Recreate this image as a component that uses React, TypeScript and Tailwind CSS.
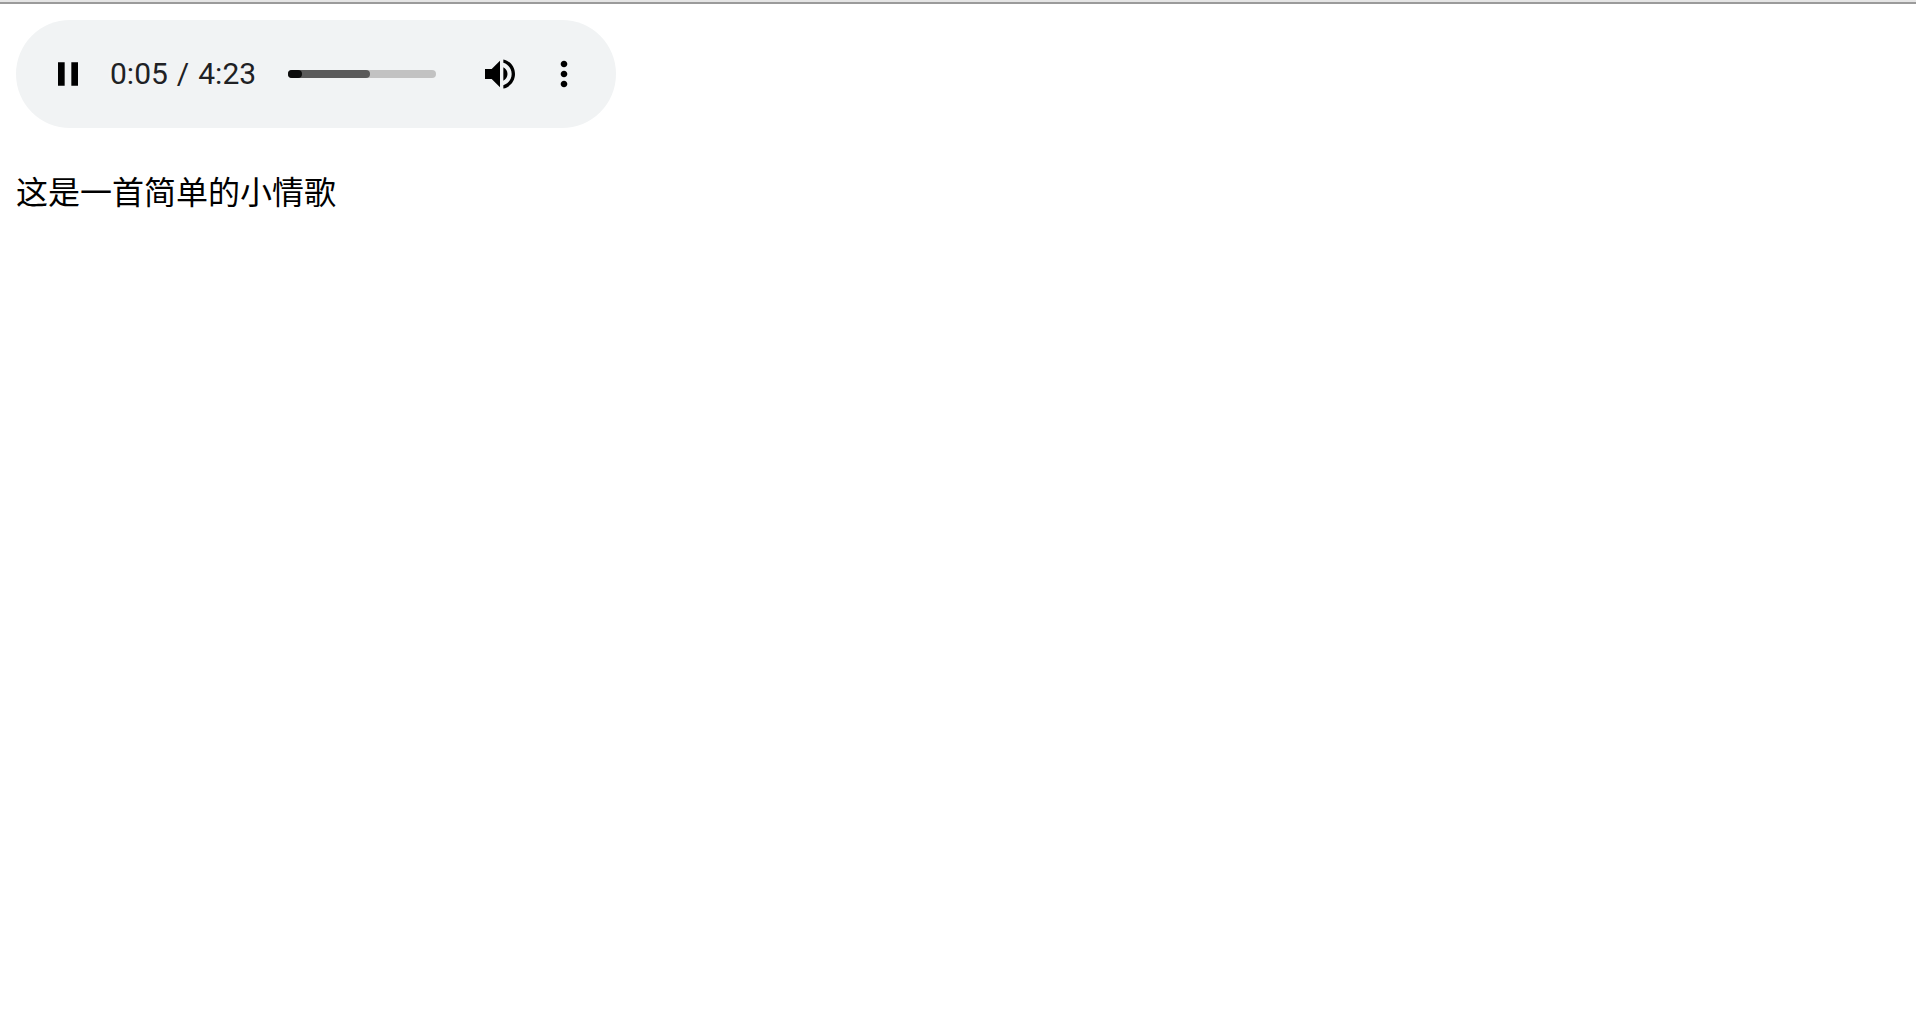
import React, { useState } from 'react';

const DURATION = 263;
const BUFFERED = 145;

const formatTime = (seconds: number) => {
  const minutes = Math.floor(seconds / 60);
  return `${minutes}:${String(seconds % 60).padStart(2, '0')}`;
};

interface IconButtonProps {
  label: string;
  path: string;
  className?: string;
  onClick?: () => void;
}

function IconButton({ label, path, className = '', onClick }: IconButtonProps) {
  return (
    <button type="button" aria-label={label} onClick={onClick} className={`shrink-0 ${className}`}>
      <svg viewBox="0 0 24 24" className="block w-10 h-10" fill="black">
        <path d={path} />
      </svg>
    </button>
  );
}

function AudioPlayer() {
  const [playing, setPlaying] = useState(true);
  const [muted, setMuted] = useState(false);
  const [time, setTime] = useState(5);

  return (
    <div className="flex items-center w-[600px] max-w-full h-[108px] px-8 rounded-full bg-[#f1f3f4]">
      <IconButton
        label={playing ? 'pause' : 'play'}
        path={playing ? 'M6 19h4V5H6v14zm8-14v14h4V5h-4z' : 'M8 5v14l11-7z'}
        onClick={() => setPlaying(!playing)}
      />
      <div className="flex gap-[9px] w-[200px] pl-[22px] shrink-0 whitespace-nowrap font-['Roboto',sans-serif] text-[30px] leading-10 text-[#202124] text-shadow-[0_0_10px_#ffffff80]">
        <span>{formatTime(time)}</span>
        <span>/</span>
        <span>{formatTime(DURATION)}</span>
      </div>

      {/* Timeline */}
      <div className="relative flex-1 h-2 rounded-full bg-[#c2c2c2]">
        <div
          className="absolute inset-y-0 left-0 rounded-full bg-[#5a5a5a]"
          style={{ width: `${(BUFFERED / DURATION) * 100}%` }}
        />
        <div
          className="absolute inset-y-0 left-0 min-w-[14px] rounded-full bg-[#0c0c0c]"
          style={{ width: `${(time / DURATION) * 100}%` }}
        />
        <input
          type="range"
          aria-label="audio time scrubber"
          min={0}
          max={DURATION}
          value={time}
          onChange={(e) => setTime(Number(e.target.value))}
          className="absolute inset-0 w-full h-full opacity-0 cursor-pointer"
        />
      </div>

      <IconButton
        label={muted ? 'unmute' : 'mute'}
        path={
          muted
            ? 'M3 9v6h4l5 5V4L7 9H3z'
            : 'M3 9v6h4l5 5V4L7 9H3zm13.5 3c0-1.77-1.02-3.29-2.5-4.03v8.05c1.48-.73 2.5-2.25 2.5-4.02zM14 3.23v2.06c2.89.86 5 3.54 5 6.71s-2.11 5.85-5 6.71v2.06c4.01-.91 7-4.49 7-8.77s-2.99-7.86-7-8.77z'
        }
        className="ml-11"
        onClick={() => setMuted(!muted)}
      />
      <IconButton
        label="show more media controls"
        path="M12 8c1.1 0 2-.9 2-2s-.9-2-2-2-2 .9-2 2 .9 2 2 2zm0 2c-1.1 0-2 .9-2 2s.9 2 2 2 2-.9 2-2-.9-2-2-2zm0 6c-1.1 0-2 .9-2 2s.9 2 2 2 2-.9 2-2-.9-2-2-2z"
        className="ml-6"
      />
    </div>
  );
}

export default function App() {
  return (
    <div className="min-h-screen bg-white font-['Liberation_Sans','Noto_Sans_CJK_SC',sans-serif]">
      <div className="h-1 border-b-2 border-[#9b9b9b] bg-[#e5e5e5]" />
      <main className="p-4">
        <AudioPlayer />
        <p className="mt-10 text-[32px] leading-[50px] text-black">这是一首简单的小情歌</p>
      </main>
    </div>
  );
}
